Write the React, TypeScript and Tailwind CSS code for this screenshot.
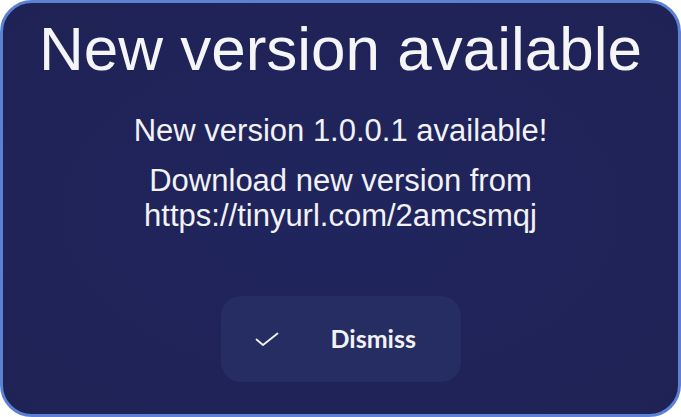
import React from 'react';

function CheckIcon() {
  return (
    <svg width="24" height="14" viewBox="0 0 24 14" fill="none" className="shrink-0">
      <path d="M1.5 7.5 L8 13 L22.5 1.5" stroke="#f2f2f5" strokeWidth="1.8" strokeLinecap="round" strokeLinejoin="round" />
    </svg>
  );
}

export default function App() {
  return (
    <div className="w-full h-[417px] bg-white">
      <div className="h-full w-full rounded-[32px] border-[3px] border-[#5b80d4] bg-[#1f2358] bg-[radial-gradient(ellipse_at_center,#20255e_0%,#1f2358_60%,#1e2254_100%)] flex flex-col items-center text-white font-['Liberation_Sans',Arial,sans-serif]">
        {/* Header */}
        <h1 className="pt-[15px] text-[62px] leading-none font-normal text-[#f5f5f7] whitespace-nowrap">
          New version available
        </h1>

        {/* Body */}
        <p className="mt-[33px] text-[31px] leading-[35px] text-[#f2f2f5]">
          New version 1.0.0.1 available!
        </p>
        <p className="mt-[15px] text-[31px] leading-[35px] text-center text-[#f2f2f5]">
          Download new version from
          <br />
          https://tinyurl.com/2amcsmqj
        </p>

        {/* Action */}
        <button className="mt-[63px] w-[240px] h-[86px] rounded-[20px] bg-[#262d63] flex items-center pl-[34px]">
          <CheckIcon />
          <span className="ml-[52px] font-['Lato',sans-serif] font-bold text-[25px] text-[#f2f2f5]">
            Dismiss
          </span>
        </button>
      </div>
    </div>
  );
}
